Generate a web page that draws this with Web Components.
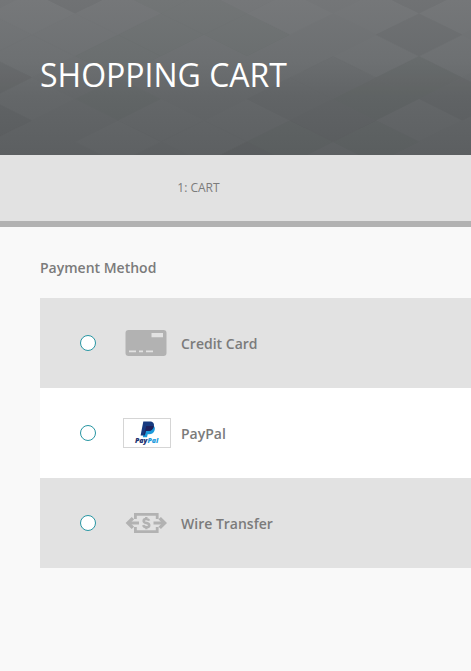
<!DOCTYPE html>
<html lang="en">
<head>
<meta charset="utf-8">
<meta name="viewport" content="width=device-width, initial-scale=1">
<title>Shopping Cart</title>
<style>
    body {
        margin: 0;
        background-color: #f9f9f9;
        color: #7b7b7b;
        font-family: "Open Sans", "Liberation Sans", sans-serif;
        font-size: 14px;
        line-height: 20px;
    }
</style>
</head>
<body>
<page-header>Shopping Cart</page-header>
<cart-steps>
    <cart-step href="#cart">1: Cart</cart-step>
</cart-steps>
<payment-methods></payment-methods>

<script>
/* header with the diamond pattern */
class PageHeader extends HTMLElement {
    constructor() {
        super();
        const shadow = this.attachShadow({ mode: 'open' });
        shadow.innerHTML = `
            <style>
                :host {
                    display: block;
                    position: relative;
                    overflow: hidden;
                    padding: 50px 40px 55px;
                    background: linear-gradient(#747678, #6c6f71 40%, #636668 62%, #5c5f61);
                    color: white;
                }
                svg {
                    position: absolute;
                    inset: 0;
                    width: 100%;
                    height: 100%;
                }
                h1 {
                    position: relative;
                    margin: 0;
                    font-size: 32px;
                    font-weight: 400;
                    line-height: 50px;
                    text-transform: uppercase;
                }
            </style>
            <svg aria-hidden="true"></svg>
            <h1><slot></slot></h1>
        `;
        // column, row, shade: negative is darker, positive is lighter
        const diamonds = [
            [1, 0, -3], [9, 0, -3], [3, 0, -1], [5, 0, 1],
            [0, 1, 2], [2, 1, 1], [6, 1, 2], [4, 1, -1], [8, 1, 1], [10, 1, 1],
            [9, 2, -3], [5, 2, -1], [-1, 2, 1], [1, 2, 1], [7, 2, 0], [3, 2, -1],
            [0, 3, 1], [8, 3, 1], [10, 3, 1], [2, 3, -1],
            [-1, 4, -3], [7, 4, -2], [9, 4, -4], [1, 4, 0],
            [8, 5, -4], [10, 5, -3], [6, 5, -2], [2, 5, -1], [0, 5, 1],
            [-1, 6, -3], [7, 6, -3], [3, 6, 1], [9, 6, 1], [5, 6, 1],
            [2, 7, 2], [6, 7, -1], [8, 7, -1], [4, 7, 1],
            [5, 8, -3], [7, 8, 1], [1, 8, 0]
        ];
        const paths = diamonds.map(([col, row, shade]) => {
            const x = 32 + col * 43;
            const y = -8 + row * 21.4;
            const fill = shade < 0 ? '#3c403e' : '#ffffff';
            const opacity = Math.abs(shade) * (shade < 0 ? 0.022 : 0.008);
            return `<path fill="${fill}" fill-opacity="${opacity}" d="M${x - 43} ${y}l43 -21.4 43 21.4 -43 21.4z"/>`;
        });
        shadow.querySelector('svg').innerHTML = paths.join('');
    }
}
customElements.define('page-header', PageHeader);

/* bar with the steps of the checkout */
class CartSteps extends HTMLElement {
    constructor() {
        super();
        this.attachShadow({ mode: 'open' }).innerHTML = `
            <style>
                :host {
                    display: block;
                    background-color: #e2e2e2;
                    border-bottom: 6px solid #b2b2b2;
                }
                nav {
                    display: flex;
                    justify-content: center;
                    padding: 23px 74px 23px 0;
                }
            </style>
            <nav aria-label="Checkout steps"><slot></slot></nav>
        `;
    }
}
customElements.define('cart-steps', CartSteps);

class CartStep extends HTMLElement {
    constructor() {
        super();
        const shadow = this.attachShadow({ mode: 'open' });
        shadow.innerHTML = `
            <style>
                :host {
                    display: block;
                    font-size: 12px;
                }
                a {
                    color: inherit;
                    text-decoration: none;
                    text-transform: uppercase;
                }
            </style>
            <a><slot></slot></a>
        `;
        shadow.querySelector('a').href = this.getAttribute('href') || '#';
    }
}
customElements.define('cart-step', CartStep);

/* icons of the payment methods */
const icons = {
    card: `
        <svg width="48" height="30" viewBox="0 0 48 30" aria-hidden="true">
            <rect x="2.5" y="2" width="41" height="26" rx="3" fill="#b2b2b2"/>
            <path fill="#e2e2e2" d="M28.500 5h11.500v4.200h-11.500zM6 22.500h7v1.700h-7zM16 22.500h4v1.700h-4zM23 22.500h7v1.700h-7z"/>
        </svg>`,
    paypal: `
        <svg width="48" height="30" viewBox="0 0 48 30" aria-hidden="true">
            <rect x=".5" y=".5" width="47" height="29" fill="#fff" stroke="#d5d5d5"/>
            <path fill="#1c9bdc" d="M22 7h7.500c2 1 2.800 2.700 2.200 5-.8 3-2.800 4.300-5.700 4.300h-1.300l-.7 2.900h-4.200z"/>
            <path fill="#173a80" d="M20.300 3.500h6.500c3 0 4.700 1.700 4.100 4.700-.7 3.500-3 4.900-6.200 4.900h-1.900l-1 4.300h-4.200z"/>
            <path fill="#20215c" d="M23.300 8h3.300c2 0 3.500-.2 4.200.3-.8 3.300-3 4.800-6.100 4.800h-1.900l-.8 3.500h-1z"/>
            <text x="12" y="25" font-family="Open Sans, sans-serif" font-size="7" font-weight="800" font-style="italic" fill="#20306f">Pay<tspan fill="#1c9bdc">Pal</tspan></text>
        </svg>`,
    wire: `
        <svg width="48" height="30" viewBox="0 0 48 30" aria-hidden="true">
            <g fill="none" stroke="#b2b2b2" stroke-width="2.400">
                <path stroke-width="2.800" d="M12.400 11V6.400h21.800V11M12.400 19v4.600h21.800V19"/>
                <path stroke-width="3" d="M16 15H6M30.500 15H41"/>
                <path stroke-width="3.400" d="M9.900 10.100L5 15l4.900 4.900M36.700 10.100l4.900 4.900-4.900 4.900"/>
                <path d="M26.200 12.700c-.4-1.200-1.400-1.700-2.900-1.700-1.600 0-2.700.7-2.700 1.900 0 2.900 5.700 1.300 5.700 4.300 0 1.300-1.200 2-2.900 2-1.700 0-2.800-.6-3.200-2M23.300 9v2M23.300 19v2.300"/>
            </g>
        </svg>`
};

/* one selectable row */
class PaymentOption extends HTMLElement {
    constructor() {
        super();
        const shadow = this.attachShadow({ mode: 'open' });
        shadow.innerHTML = `
            <style>
                :host {
                    display: block;
                    background-color: #e2e2e2;
                }
                :host(:nth-of-type(even)) {
                    background-color: white;
                }
                label {
                    display: flex;
                    align-items: center;
                    gap: 10px;
                    padding: 30px 40px;
                    font-weight: 600;
                    cursor: pointer;
                }
                input {
                    appearance: none;
                    flex: none;
                    width: 16px;
                    height: 16px;
                    margin: 0 17px 0 0;
                    border: 1px solid #2796a3;
                    border-radius: 50%;
                    background-color: white;
                }
                input:checked {
                    background-color: #2796a3;
                    box-shadow: inset 0 0 0 3px white;
                }
                svg {
                    display: block;
                    flex: none;
                }
                span {
                    padding-top: 2px;
                }
            </style>
            <label>
                <input type="radio" name="payment">
                ${icons[this.getAttribute('icon')]}
                <span><slot></slot></span>
            </label>
        `;
        this.input = shadow.querySelector('input');
        this.input.addEventListener('change', () => {
            this.dispatchEvent(new CustomEvent('option-selected', { bubbles: true }));
        });
    }
}
customElements.define('payment-option', PaymentOption);

/* list of payment methods */
class PaymentMethods extends HTMLElement {
    constructor() {
        super();
        const shadow = this.attachShadow({ mode: 'open' });
        shadow.innerHTML = `
            <style>
                :host {
                    display: block;
                    padding: 31px 0 40px 40px;
                }
                h2 {
                    margin: 0 0 20px;
                    font-size: 14px;
                    font-weight: 600;
                    line-height: 20px;
                }
            </style>
            <h2 id="title">Payment Method</h2>
            <div role="radiogroup" aria-labelledby="title">
                <payment-option icon="card">Credit Card</payment-option>
                <payment-option icon="paypal">PayPal</payment-option>
                <payment-option icon="wire">Wire Transfer</payment-option>
            </div>
        `;
        // radios in separate shadow roots do not group by name
        shadow.addEventListener('option-selected', event => {
            shadow.querySelectorAll('payment-option').forEach(option => {
                option.input.checked = option === event.target;
            });
        });
    }
}
customElements.define('payment-methods', PaymentMethods);
</script>
</body>
</html>
